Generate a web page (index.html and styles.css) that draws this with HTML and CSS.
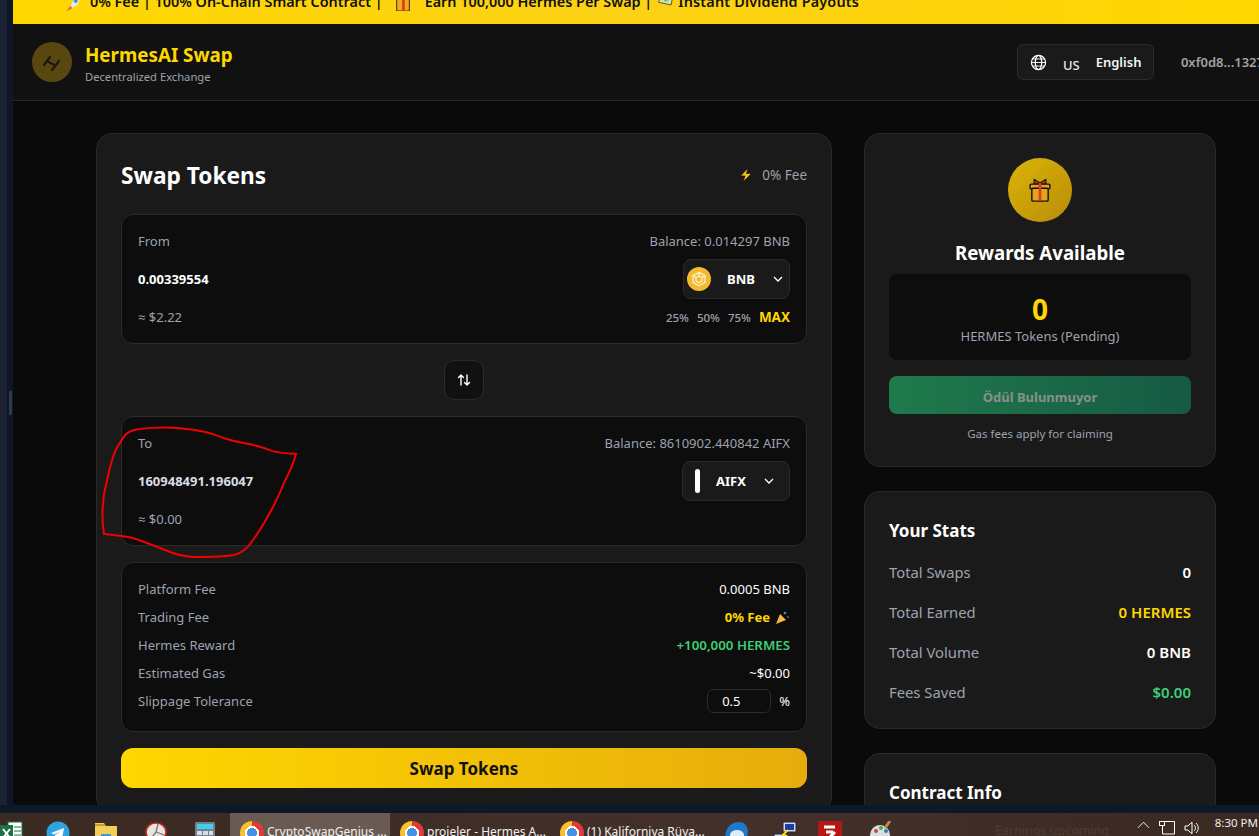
FILE: index.html
```html
<!DOCTYPE html>
<html lang="en">
<head>
<meta charset="utf-8">
<title>HermesAI Swap</title>
<link rel="stylesheet" href="styles.css">
</head>
<body>
<div class="desktop">
  <div class="window-area">
    <div class="side-strip"><span class="handle"></span></div>
    <div class="app">
      <div class="banner">
        <svg class="emoji" viewBox="0 0 20 20"><path d="M4 19 L9 9 L17 3 L18 4 L14 13 Z" fill="#dfe8ef"/><path d="M2 20 L6 14 L8 17 Z" fill="#e8642c"/><circle cx="12" cy="9" r="2" fill="#3b88c3"/></svg>
        <span>0% Fee | 100% On-Chain Smart Contract |</span>
        <svg class="emoji emoji-gift" viewBox="0 0 20 20"><rect x="3" y="1" width="14" height="19" fill="#f4a81c" stroke="#222"/><rect x="9" y="1" width="3" height="19" fill="#d8401f"/></svg>
        <span class="banner-earn">Earn 100,000 Hermes Per Swap |</span>
        <svg class="emoji emoji-money" viewBox="0 0 20 20"><rect x="3" y="0" width="14" height="12" transform="rotate(12 10 6)" fill="#cfe3a8" stroke="#555"/><circle cx="10" cy="7" r="2.5" fill="#8fae5a"/></svg>
        <span class="banner-last">Instant Dividend Payouts</span>
      </div>

      <header class="header">
        <div class="brand">
          <div class="logo">
            <svg viewBox="0 0 40 40" width="40" height="40" fill="none" stroke="#1b1a10" stroke-width="2.2" stroke-linecap="round"><path d="M12 23 L18 15 M20 28 L27 19 M15.5 19.5 L23.5 23.5"/></svg>
          </div>
          <div>
            <div class="brand-name">HermesAI Swap</div>
            <div class="brand-sub">Decentralized Exchange</div>
          </div>
        </div>
        <div class="header-right">
          <div class="lang">
            <svg viewBox="0 0 24 24" width="17" height="17" fill="none" stroke="#fff" stroke-width="1.8"><circle cx="12" cy="12" r="10"/><ellipse cx="12" cy="12" rx="4.5" ry="10"/><path d="M2 12 H22 M3.5 7 H20.5 M3.5 17 H20.5" stroke-width="1.3"/></svg>
            <span class="lang-code">US</span>
            <span class="lang-name">English</span>
          </div>
          <div class="address">0xf0d8...1327</div>
        </div>
      </header>

      <main class="main">
        <section class="card swap-card">
          <div class="swap-head">
            <h1 class="swap-title">Swap Tokens</h1>
            <div class="fee-chip">
              <svg viewBox="0 0 16 16" width="16" height="16"><path d="M10 1 L2.5 9 H7 L5 15 L13.5 6.5 H8.5 Z" fill="#fbbf24" stroke="#1a1200" stroke-width=".7"/></svg>
              <span>0% Fee</span>
            </div>
          </div>

          <div class="box">
            <div class="row"><span class="muted">From</span><span class="muted">Balance: 0.014297 BNB</span></div>
            <div class="row row-token">
              <span class="amount">0.00339554</span>
              <div class="selector">
                <span class="bnb-icon">
                  <svg viewBox="0 0 24 24" width="18" height="18" fill="none" stroke="#fff1c8" stroke-width="1.7" stroke-linejoin="round"><path d="M12 3 L20 7.5 V16.5 L12 21 L4 16.5 V7.5 Z M12 3 V8 M4 7.5 L8 10 M20 7.5 L16 10 M12 8 L16 10 V14.5 L12 17 L8 14.5 V10 Z"/></svg>
                </span>
                <span class="token-name">BNB</span>
                <svg class="chev" viewBox="0 0 12 12"><path d="M2 4 L6 8 L10 4" fill="none" stroke="#fff" stroke-width="1.3"/></svg>
              </div>
            </div>
            <div class="row">
              <span class="muted">≈ $2.22</span>
              <div class="pcts"><span>25%</span><span>50%</span><span>75%</span><span class="max">MAX</span></div>
            </div>
          </div>

          <div class="switch-wrap">
            <button class="switch" type="button">
              <svg viewBox="0 0 16 16" width="16" height="16" fill="none" stroke="#fff" stroke-width="1.4" stroke-linecap="round" stroke-linejoin="round"><path d="M5 13 V3 M2.5 5.5 L5 3 L7.5 5.5 M11 3 V13 M8.5 10.5 L11 13 L13.5 10.5"/></svg>
            </button>
          </div>

          <div class="box">
            <div class="row"><span class="muted">To</span><span class="muted">Balance: 8610902.440842 AIFX</span></div>
            <div class="row row-token">
              <span class="amount amount-dim">160948491.196047</span>
              <div class="selector selector-aifx">
                <span class="bar-icon"></span>
                <span class="token-name">AIFX</span>
                <svg class="chev" viewBox="0 0 12 12"><path d="M2 4 L6 8 L10 4" fill="none" stroke="#fff" stroke-width="1.3"/></svg>
              </div>
            </div>
            <div class="row"><span class="muted">≈ $0.00</span></div>
          </div>

          <div class="box details">
            <div class="detail"><span class="muted">Platform Fee</span><span>0.0005 BNB</span></div>
            <div class="detail"><span class="muted">Trading Fee</span><span class="yellow strong fee-val">0% Fee
              <svg class="party" viewBox="0 0 16 16" width="16" height="16"><path d="M2 15 L6 5 L12 11 Z" fill="#f4b942"/><circle cx="11" cy="4" r="1.3" fill="#3b88c3"/><circle cx="14" cy="8" r="1.2" fill="#a0302a"/></svg></span></div>
            <div class="detail"><span class="muted">Hermes Reward</span><span class="green reward-val">+100,000 HERMES</span></div>
            <div class="detail"><span class="muted">Estimated Gas</span><span>~$0.00</span></div>
            <div class="detail"><span class="muted">Slippage Tolerance</span><span class="slip"><input class="slip-input" type="text" value="0.5"><span>%</span></span></div>
          </div>

          <button class="swap-btn" type="button">Swap Tokens</button>
        </section>

        <aside class="side">
          <section class="card rewards">
            <div class="gift">
              <svg viewBox="0 0 24 24" width="28" height="28"><path d="M7 3 L12 6 L17 3 L17 7 H7 Z" fill="#d8401f" stroke="#111" stroke-width="1"/><rect x="3.5" y="7" width="17" height="4" rx="1" fill="#e8a317" stroke="#111" stroke-width="1.2"/><rect x="5" y="10.5" width="14" height="11" rx="1" fill="#e8a317" stroke="#111" stroke-width="1.2"/><rect x="10.8" y="6" width="2.4" height="15" fill="#d8401f"/></svg>
            </div>
            <h2 class="rewards-title">Rewards Available</h2>
            <div class="pending">
              <div class="pending-num">0</div>
              <div class="pending-label">HERMES Tokens (Pending)</div>
            </div>
            <button class="claim" type="button">Ödül Bulunmuyor</button>
            <div class="gas-note">Gas fees apply for claiming</div>
          </section>

          <section class="card stats">
            <h3 class="card-title">Your Stats</h3>
            <div class="stat"><span class="muted">Total Swaps</span><span class="stat-val">0</span></div>
            <div class="stat"><span class="muted">Total Earned</span><span class="stat-val yellow">0 HERMES</span></div>
            <div class="stat"><span class="muted">Total Volume</span><span class="stat-val">0 BNB</span></div>
            <div class="stat"><span class="muted">Fees Saved</span><span class="stat-val green">$0.00</span></div>
          </section>

          <section class="card contract">
            <h3 class="card-title">Contract Info</h3>
          </section>
        </aside>
      </main>
    </div>
  </div>

  <div class="taskbar">
    <div class="tb-icon tb-excel"><svg viewBox="0 0 24 24" width="24" height="24"><rect x="8" y="1" width="14" height="22" fill="#fff" stroke="#1d7044"/><rect x="0" y="4" width="13" height="17" fill="#1d7044"/><path d="M3 8 L10 17 M10 8 L3 17" stroke="#fff" stroke-width="2"/><path d="M14 6 H21 M14 10 H21 M14 14 H21" stroke="#1d7044"/></svg></div>
    <div class="tb-icon tb-telegram"><svg viewBox="0 0 24 24" width="24" height="24"><circle cx="12" cy="12" r="11.5" fill="#2ea3dc"/><path d="M5 12 L18 7 L16 18 L11 15 L9 18 L9 14 L15 10 L8 13.5 Z" fill="#fff"/></svg></div>
    <div class="tb-icon tb-folder"><svg viewBox="0 0 24 24" width="24" height="24"><path d="M1 2 H10 L12 5 H23 V24 H1 Z" fill="#f5cd5a"/><rect x="1" y="3" width="10" height="2" fill="#c99a24"/><rect x="7" y="13" width="10" height="5" fill="#3b9ae0"/></svg></div>
    <div class="tb-icon tb-paint"><svg viewBox="0 0 24 24" width="24" height="24"><ellipse cx="12" cy="11" rx="10" ry="9" fill="#e8e4df" stroke="#c02a2a" stroke-width="1.6"/><path d="M12 11 L5 20 M12 11 L14 3 M12 11 L20 14" stroke="#777" stroke-width="1.3"/><circle cx="18" cy="20" r="4" fill="#2a7fb8"/></svg></div>
    <div class="tb-icon tb-calc"><svg viewBox="0 0 24 24" width="24" height="24"><rect x="2" y="1" width="20" height="23" rx="1.5" fill="#74818c"/><rect x="4" y="3" width="16" height="5" fill="#3fd0f0"/><path d="M4 10 H9 V14 H4 Z M10 10 H15 V14 H10 Z M16 10 H20 V14 H16 Z M4 15 H9 V19 H4 Z M10 15 H15 V19 H10 Z" fill="#d8dee3"/><rect x="16" y="15" width="4" height="8" fill="#0f5d9e"/></svg></div>
    <div class="tb-app tb-app-active"><span class="chrome"></span><span class="tb-label">CryptoSwapGenius ...</span></div>
    <div class="tb-app"><span class="chrome"></span><span class="tb-label">projeler - Hermes A...</span></div>
    <div class="tb-app"><span class="chrome"></span><span class="tb-label">(1) Kaliforniya Rüya...</span></div>
    <div class="tb-icon tb-bird"><svg viewBox="0 0 24 24" width="24" height="24"><path d="M1 18 C1 8 6 1 15 1 C20 1 23 4 24 10 C24 18 19 24 11 24 C6 24 2 22 1 18 Z" fill="#1f78c8"/><ellipse cx="13" cy="14" rx="7" ry="5" fill="#dcecf8"/></svg></div>
    <div class="tb-icon tb-putty"><svg viewBox="0 0 24 24" width="24" height="24"><rect x="10" y="1" width="13" height="10" fill="#d5dbe6" stroke="#223"/><rect x="12" y="3" width="9" height="6" fill="#1a3bb0"/><rect x="1" y="13" width="13" height="10" fill="#d5dbe6" stroke="#223"/><path d="M15 9 L9 15 L13 15 L8 22" stroke="#f2e21c" stroke-width="2" fill="none"/></svg></div>
    <div class="tb-icon tb-filezilla"><svg viewBox="0 0 24 24" width="24" height="24"><rect width="24" height="24" fill="#b81616"/><path d="M6 6 H17 M8 11 H15 M17 11 L7 21 H17" stroke="#fff" stroke-width="3" fill="none"/></svg></div>
    <div class="tb-icon tb-palette"><svg viewBox="0 0 24 24" width="24" height="24"><ellipse cx="11" cy="14" rx="10" ry="10" fill="#d9dfe0"/><circle cx="7" cy="10" r="2" fill="#d8401f"/><circle cx="12" cy="7" r="2" fill="#3bb04a"/><circle cx="17" cy="10" r="2" fill="#2a7fb8"/><path d="M16 7 L21 0" stroke="#b98a4a" stroke-width="3"/></svg></div>
    <span class="tb-news">Earnings upcoming</span>
    <div class="tray">
      <svg viewBox="0 0 14 8" width="13" height="8"><path d="M1 7 L7 1 L13 7" fill="none" stroke="#fff"/></svg>
      <svg viewBox="0 0 16 14" width="16" height="14"><path d="M3.5 .5 H15.5 V13 H3.5 Z" fill="none" stroke="#fff"/><rect x=".5" y=".5" width="5" height="4" fill="#3a2a22" stroke="#fff"/></svg>
      <svg viewBox="0 0 16 14" width="16" height="14"><path d="M1 5 H4 L8 1 V13 L4 9 H1 Z" fill="none" stroke="#fff"/><path d="M10 4 C12 6 12 8 10 10 M12 2 C15 5 15 9 12 12" fill="none" stroke="#fff"/></svg>
      <div class="clock">8:30 PM</div>
    </div>
  </div>

  <svg class="scribble" viewBox="0 0 1259 836" width="1259" height="836">
    <path d="M104 534 C101 515 103 495 107 480 C111 463 114 450 120 443 C125 433 130 430 140 429 C160 426 185 428 200 431 C212 433 220 437 227 439 C235 442 240 442 244 443 C252 444 260 447 267 449 C274 453 284 453 296 454 C294 462 289 473 284 483 C280 493 276 501 273 507 C266 520 259 532 253 540 C248 548 243 553 234 555 C222 557 205 557 193 557 C180 556 172 553 165 550 C155 546 145 542 133 538 C125 536 115 535 104 534 Z" fill="none" stroke="#f00000" stroke-width="2"/>
  </svg>
</div>
</body>
</html>
```
FILE: styles.css
```css
* { box-sizing: border-box; }
html, body { margin: 0; padding: 0; height: 100%; overflow: hidden; }
body { font-family: "Noto Sans", "Open Sans", sans-serif; color: #fff; background: #0d1828; }
h1, h2, h3 { margin: 0; }
button, input { font-family: inherit; }

.desktop { position: relative; width: 1259px; height: 836px; display: flex; flex-direction: column; overflow: hidden; }
.window-area { flex: none; height: 805px; display: flex; overflow: hidden; }
.side-strip { flex: none; width: 13px; background: #0f1626; border-left: 7px solid #1a2233; display: flex; align-items: center; }
.handle { width: 3px; height: 24px; margin-left: 2px; background: #2c3a55; }
.app { flex: none; width: 1246px; height: 805px; background: #0a0a0a; overflow: hidden; border-bottom-left-radius: 4px; }

.banner { height: 24px; background: linear-gradient(90deg, #ffd700, #fcd116 50%, #ffd700); color: #111; display: flex; justify-content: flex-start; align-items: flex-end; gap: 7px; font-size: 14.4px; font-weight: 600; line-height: 20px; overflow: hidden; padding: 0 0 12px 52px; }
.banner span { flex: none; }
.emoji { flex: none; width: 18px; height: 18px; margin-bottom: 1px; }
.emoji-gift { margin-left: 4px; }
.banner-earn { margin-left: 6px; }
.emoji-money { margin-left: -2px; margin-right: -4px; }
.banner-last { letter-spacing: .17px; }

.header { height: 77px; background: #111; border-bottom: 1px solid #2a2a2a; display: flex; align-items: center; justify-content: space-between; padding: 0 0 0 19px; }
.brand { display: flex; align-items: center; gap: 13px; }
.logo { width: 40px; height: 40px; border-radius: 50%; background: #584810; display: flex; align-items: center; justify-content: center; }
.brand-name { font-size: 18.8px; font-weight: 700; color: #ffd700; line-height: 26px; margin-top: 3px; margin-bottom: 1px; }
.brand-sub { font-size: 11.2px; color: #9ca3af; line-height: 16px; }
.header-right { display: flex; align-items: center; gap: 27px; margin-right: -5px; flex: none; }
.lang { width: 137px; height: 36px; border: 1px solid #2a2a2a; border-radius: 6px; background: #1a1a1a; display: flex; align-items: center; padding-left: 12px; font-size: 13px; }
.lang-code { margin-left: 16px; padding-top: 5px; font-weight: 500; color: #e5e7eb; }
.lang-name { margin-left: 16px; font-weight: 600; color: #f3f4f6; }
.address { font-size: 13px; font-weight: 600; color: #a3a3a3; white-space: nowrap; }

.main { display: grid; grid-template-columns: 736px 352px; gap: 32px; padding: 32px 0 0 83px; align-items: start; }
.card { background: #1a1a1a; border: 1px solid #2a2a2a; border-radius: 16px; }
.swap-card { padding: 24px; }
.swap-head { height: 33px; margin-bottom: 23px; display: flex; justify-content: space-between; align-items: center; }
.swap-title { font-size: 22.7px; font-weight: 700; line-height: 36px; padding-top: 2px; }
.fee-chip { display: flex; align-items: center; gap: 8px; font-size: 13.5px; color: #9ca3af; }

.box { background: #0d0d0d; border: 1px solid #2a2a2a; border-radius: 12px; padding: 16px; }
.row { display: flex; justify-content: space-between; align-items: center; min-height: 20px; font-size: 13px; }
.row-token { margin: 8px 0; }
.muted { color: #9ca3af; }
.amount { font-size: 13px; font-weight: 700; color: #fff; }
.amount-dim { color: #d8dde3; }
.selector { width: 107px; height: 40px; border: 1px solid #2a2a2a; border-radius: 8px; background: #1a1a1a; display: flex; align-items: center; padding-left: 3px; }
.bnb-icon { width: 24px; height: 24px; border-radius: 50%; background: #f3ba2f; display: flex; align-items: center; justify-content: center; flex: none; }
.token-name { font-size: 13px; font-weight: 700; margin-left: 16px; width: 28px; }
.chev { width: 12px; height: 12px; margin-left: 17px; flex: none; }
.selector-aifx { width: 108px; padding-left: 12px; }
.bar-icon { width: 5px; height: 24px; border-radius: 3px; background: #fff; flex: none; }
.selector-aifx .token-name { margin-left: 16px; width: 31px; }
.selector-aifx .chev { margin-left: 16px; }
.pcts { display: flex; align-items: center; gap: 8px; font-size: 11.5px; color: #9ca3af; font-weight: 500; }
.max { color: #ffd700; font-weight: 700; font-size: 13.5px; padding-bottom: 1px; }

.switch-wrap { display: flex; justify-content: center; padding: 16px 0; }
.switch { width: 40px; height: 40px; border-radius: 10px; background: #111; border: 1px solid #2a2a2a; padding: 0; display: flex; align-items: center; justify-content: center; }

.details { margin-top: 16px; height: 170px; padding: 12px 16px; }
.detail { height: 28px; display: flex; justify-content: space-between; align-items: center; font-size: 13px; }
.strong { font-weight: 700; }
.yellow { color: #ffd700; }
.green { color: #3ecf74; }
.fee-val { display: flex; align-items: center; gap: 4px; }
.reward-val { font-weight: 600; font-size: 13.3px; }
.party { flex: none; }
.slip { display: flex; align-items: center; gap: 8px; }
.slip-input { width: 64px; height: 24px; background: #0d0d0d; border: 1px solid #2a2a2a; border-radius: 6px; color: #fff; font-size: 13px; padding: 0 14px; }

.swap-btn { display: block; width: 100%; height: 40px; margin-top: 16px; border: 0; border-radius: 12px; background: linear-gradient(90deg, #ffd700, #e6ac0c); color: #111; font-size: 17px; font-weight: 700; padding: 1px 0 0; }

.side { display: flex; flex-direction: column; gap: 24px; }
.rewards { height: 334px; padding: 24px; display: flex; flex-direction: column; align-items: center; }
.gift { width: 64px; height: 64px; border-radius: 50%; background: linear-gradient(135deg, #dbb408, #b98c08); display: flex; align-items: center; justify-content: center; flex: none; }
.rewards-title { font-size: 18.7px; font-weight: 700; line-height: 28px; margin-top: 17px; }
.pending { width: 100%; height: 88px; margin-top: 7px; background: #0d0d0d; border-radius: 8px; text-align: center; padding-top: 16px; }
.pending-num { font-size: 28px; font-weight: 700; color: #ffd700; line-height: 38px; }
.pending-label { font-size: 13px; color: #9ca3af; line-height: 16px; }
.claim { width: 100%; height: 39px; margin-top: 16px; border: 0; border-radius: 8px; background: linear-gradient(90deg, #1f7a4c, #165a44); color: #8a8f8c; font-size: 13px; font-weight: 700; padding: 3px 0 0; }
.gas-note { font-size: 11.5px; color: #9ca3af; margin-top: 12px; line-height: 16px; }

.stats { height: 238px; padding: 24px; }
.card-title { font-size: 17px; font-weight: 700; line-height: 28px; margin: 1px 0 7px; }
.stat { height: 40px; display: flex; justify-content: space-between; align-items: center; font-size: 14.8px; }
.stat-val { font-size: 15px; font-weight: 600; }
.contract { height: 200px; padding: 24px; }

.taskbar { flex: none; height: 23px; margin-top: 8px; background: linear-gradient(90deg, #3a2a22, #43302a 60%, #3a2a22); display: flex; position: relative; overflow: hidden; }
.tb-icon { flex: none; padding-top: 8px; }
.tb-telegram { margin-left: 22px; }
.tb-folder { margin-left: 24px; }
.tb-paint { margin-left: 26px; }
.tb-calc { margin-left: 25px; }
.tb-app { flex: none; width: 160px; display: flex; padding: 8px 0 0 10px; gap: 3px; }
.tb-app-active { background: #6a5b52; margin-left: 13px; }
.chrome { width: 24px; height: 24px; border-radius: 50%; flex: none; background: radial-gradient(circle, #4a90e2 0 5px, #fff 5px 7px, transparent 7px), conic-gradient(#e23c32 0 33%, #2f9e44 33% 66%, #fbc02d 66%); }
.tb-label { font-size: 12px; color: #f2f2f2; white-space: nowrap; line-height: 20px; padding-top: 1px; }
.tb-bird { margin-left: 14px; }
.tb-putty { margin-left: 25px; }
.tb-filezilla { margin-left: 21px; }
.tb-palette { margin-left: 27px; }
.tb-news { margin-left: 102px; font-size: 12.5px; color: #4d3d33; padding-top: 9px; white-space: nowrap; }
.tray { position: absolute; right: 0; top: 0; height: 23px; width: 122px; display: flex; align-items: flex-start; gap: 9px; padding-top: 8px; }
.clock { position: absolute; right: 1px; top: 2px; font-size: 11.5px; color: #eee; white-space: nowrap; line-height: 16px; }

.scribble { position: absolute; left: 0; top: 0; pointer-events: none; }
```
